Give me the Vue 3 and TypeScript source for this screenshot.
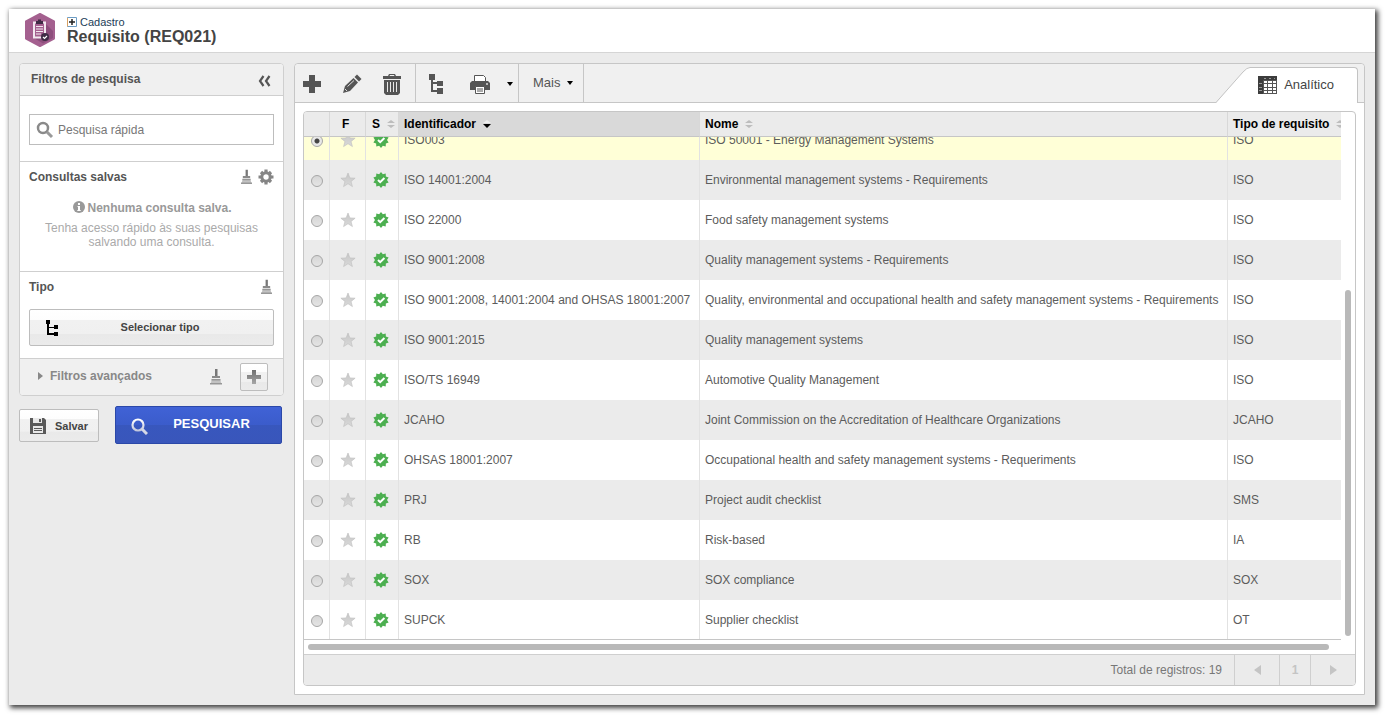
<script setup lang="ts">
import { onMounted, ref } from 'vue'

interface Requirement {
  id: string
  name: string
  type: string
}

const rows: Requirement[] = [
  { id: 'ISO003', name: 'ISO 50001 - Energy Management Systems', type: 'ISO' },
  { id: 'ISO 14001:2004', name: 'Environmental management systems - Requirements', type: 'ISO' },
  { id: 'ISO 22000', name: 'Food safety management systems', type: 'ISO' },
  { id: 'ISO 9001:2008', name: 'Quality management systems - Requirements', type: 'ISO' },
  { id: 'ISO 9001:2008, 14001:2004 and OHSAS 18001:2007', name: 'Quality, environmental and occupational health and safety management systems - Requirements', type: 'ISO' },
  { id: 'ISO 9001:2015', name: 'Quality management systems', type: 'ISO' },
  { id: 'ISO/TS 16949', name: 'Automotive Quality Management', type: 'ISO' },
  { id: 'JCAHO', name: 'Joint Commission on the Accreditation of Healthcare Organizations', type: 'JCAHO' },
  { id: 'OHSAS 18001:2007', name: 'Occupational health and safety management systems - Requeriments', type: 'ISO' },
  { id: 'PRJ', name: 'Project audit checklist', type: 'SMS' },
  { id: 'RB', name: 'Risk-based', type: 'IA' },
  { id: 'SOX', name: 'SOX compliance', type: 'SOX' },
  { id: 'SUPCK', name: 'Supplier checklist', type: 'OT' },
]

// Points of a star polygon centred in a 16x16 box.
function spikes(count: number, outer: number, inner: number, cy = 8): string {
  return Array.from({ length: count * 2 }, (_, i) => {
    const r = i % 2 ? inner : outer
    const a = (Math.PI * i) / count - Math.PI / 2
    return `${(8 + r * Math.cos(a)).toFixed(2)},${(cy + r * Math.sin(a)).toFixed(2)}`
  }).join(' ')
}
const sealPoints = spikes(10, 8, 6)
const starPoints = spikes(5, 7.5, 3.2, 8.5)

const selected = ref('ISO003')
const search = ref('')
const scroller = ref<HTMLElement | null>(null)

onMounted(() => {
  if (scroller.value) scroller.value.scrollTop = scroller.value.scrollHeight
})
</script>

<template>
  <div class="page">
    <svg class="defs" aria-hidden="true">
      <defs>
        <linearGradient id="metal" x1="0" y1="0" x2="0" y2="1">
          <stop offset="0" stop-color="#707070" />
          <stop offset="1" stop-color="#a6a6a6" />
        </linearGradient>
        <linearGradient id="silver" x1="0" y1="0" x2="0" y2="1">
          <stop offset="0" stop-color="#fff" />
          <stop offset="1" stop-color="#c4c8dc" />
        </linearGradient>
        <linearGradient id="starfill" x1="0" y1="0" x2="0" y2="1">
          <stop offset="0" stop-color="#c6c6c6" />
          <stop offset="1" stop-color="#dadada" />
        </linearGradient>
        <symbol id="brush" viewBox="0 0 12 16">
          <path d="M5 0h2.500v8H5z" fill="#777" />
          <path d="M2 7h8v2H2z" fill="#8a8a8a" />
          <path d="M2 10h8l1.500 5H.5z" fill="#c2c2c2" />
          <path d="M1.500 10h9v1.500h-9zM0 14h12v1.500H0z" fill="#979797" />
        </symbol>
        <symbol id="tree" viewBox="0 0 14 20">
          <path d="M0 0h6v6H4v2h4V7h6v5H8v-2H4v6h4v-2h6v6H8v-2H2V6H0z" />
        </symbol>
        <symbol id="sort" viewBox="0 0 8 8">
          <path d="M4 0l4 3H0zM4 8l4-3H0z" />
        </symbol>
        <symbol id="star" viewBox="0 0 16 16">
          <polygon :points="starPoints" fill="url(#starfill)" stroke="#bdbdbd" stroke-width=".6" />
        </symbol>
        <symbol id="badge" viewBox="0 0 16 16">
          <polygon :points="sealPoints" fill="#4caf50" />
          <path d="M5 8l2.200 2.200L11.400 6" fill="none" stroke="#fff" stroke-width="2" />
        </symbol>
      </defs>
    </svg>
    <div class="window">
      <header class="top">
        <svg class="logo" width="30" height="34" viewBox="0 0 30 34" aria-hidden="true">
          <path d="M15 1L29 8.500v17L15 33 1 25.500v-17z" fill="#a4608f" stroke="#a4608f" stroke-width="2" stroke-linejoin="round" />
          <path d="M19 9l9 9v7l-10 5.500-9-5.500z" fill="#8d4e7c" />
          <path d="M9 9.500h11v15H9z" fill="#a4608f" stroke="#f3e8f0" stroke-width="2" />
          <path d="M11 8h2V6.500h3V8h2v3h-7z" fill="#3f2b45" />
          <path d="M11 13.500h7M11 16h7M11 18.500h7M11 21h5" stroke="#f3e8f0" />
          <circle cx="20" cy="24" r="4" fill="#3f2b45" />
          <path d="M18 24l1.500 1.500L22 23" fill="none" stroke="#fff" stroke-width="1.200" />
        </svg>
        <div>
          <a class="crumb" href="#">
            <svg width="10" height="10" viewBox="0 0 10 10" aria-hidden="true">
              <path d="M.5.5h9v9h-9z" fill="#fff" stroke="#6c9cc4" />
              <path d="M.5 1v8.500" stroke="#d8a060" />
              <path d="M5 2v6M2 5h6" stroke="#222" stroke-width="1.500" />
            </svg>Cadastro</a>
          <h1>Requisito (REQ021)</h1>
        </div>
      </header>

      <div class="body">
        <aside class="side">
          <div class="filters">
            <div class="filters-head">
              <h2>Filtros de pesquisa</h2>
              <button class="bare" aria-label="Recolher">
                <svg width="13" height="12" viewBox="0 0 13 12"><path d="M5.500 1L2 6l3.500 5M11.500 1L8 6l3.500 5" fill="none" stroke="#555" stroke-width="2.200" /></svg>
              </button>
            </div>
            <div class="search-wrap">
              <label class="search">
                <svg width="18" height="18" viewBox="0 0 18 18" aria-hidden="true">
                  <circle cx="7" cy="7" r="5" fill="none" stroke="#8a8a8a" stroke-width="2.500" />
                  <path d="M11 11l5 5" stroke="#999" stroke-width="3" />
                </svg>
                <input v-model="search" type="text" placeholder="Pesquisa rápida" aria-label="Pesquisa rápida" />
              </label>
            </div>
            <section class="saved">
              <div class="section-head">
                <h3>Consultas salvas</h3>
                <button class="bare" aria-label="Limpar consultas"><svg width="11" height="16"><use href="#brush" /></svg></button>
                <button class="bare" aria-label="Configurar">
                  <svg width="16" height="16" viewBox="0 0 16 16">
                    <path d="M8 .5L8.010 15.500M.5 8L15.500 8.010M3 3l10 10M13 3L3 13" stroke="#858585" stroke-width="3.200" />
                    <circle cx="8" cy="8" r="4.200" fill="#fff" stroke="#858585" stroke-width="3" />
                  </svg>
                </button>
              </div>
              <p class="none">
                <svg width="12" height="12" viewBox="0 0 12 12" aria-hidden="true"><circle cx="6" cy="6" r="6" fill="#999" /><path d="M5 2h2v2H5zM4.500 5H7v4h.7v1H4.300V9H5V6h-.5z" fill="#fff" /></svg>
                Nenhuma consulta salva.
              </p>
              <p class="hint">Tenha acesso rápido às suas pesquisas salvando uma consulta.</p>
            </section>
            <section class="kind">
              <div class="section-head">
                <h3>Tipo</h3>
                <button class="bare" aria-label="Limpar tipo"><svg width="11" height="16"><use href="#brush" /></svg></button>
              </div>
              <button class="btn choose">
                <svg width="12" height="16" viewBox="0 0 12 16" aria-hidden="true"><path d="M0 0h4v4H3v3h5V5h4v4H8V8H3v5h5v-1h4v4H8v-1H1V4H0z" fill="#000" /></svg>
                <span>Selecionar tipo</span>
              </button>
            </section>
            <div class="advanced">
              <button class="bare expand">
                <svg width="5" height="8" viewBox="0 0 5 8" aria-hidden="true"><path d="M0 0l5 4-5 4z" fill="#888" /></svg>
                Filtros avançados
              </button>
              <button class="bare" aria-label="Limpar filtros"><svg width="12" height="18"><use href="#brush" /></svg></button>
              <button class="btn plus" aria-label="Adicionar filtro">
                <svg width="14" height="14" viewBox="0 0 14 14"><path d="M5 0h4v5h5v4H9v5H5V9H0V5h5z" fill="url(#metal)" /></svg>
              </button>
            </div>
          </div>
          <div class="actions">
            <button class="btn save">
              <svg width="16" height="16" viewBox="0 0 16 16" aria-hidden="true">
                <path d="M0 0h14l2 2v14H0z" fill="#5a5a5a" />
                <path d="M3 0h9v5H3zM3 8h10v7H3z" fill="#e8e8e8" />
                <path d="M9 1h2v3H9zM4 10h8v1H4zM4 12h8v1H4z" fill="#5a5a5a" />
              </svg>
              Salvar
            </button>
            <button class="find">
              <svg width="17" height="17" viewBox="0 0 17 17" aria-hidden="true">
                <circle cx="7" cy="7" r="5.500" fill="none" stroke="url(#silver)" stroke-width="2.200" />
                <path d="M11 11l5 5" stroke="#d5d8e6" stroke-width="3" />
              </svg>
              <span>PESQUISAR</span>
            </button>
          </div>
        </aside>

        <main class="main">
          <div class="toolbar">
            <div class="group edit">
              <button class="bare" aria-label="Novo"><svg width="18" height="18" viewBox="0 0 18 18"><path d="M6 0h6v6h6v6h-6v6H6v-6H0V6h6z" fill="#555" /></svg></button>
              <button class="bare" aria-label="Editar">
                <svg width="20" height="20" viewBox="0 0 20 20">
                  <path d="M1 19l2-7L11.500 4l4.500 4.500L8 17z" fill="#555" />
                  <path d="M12.500 3L15 .5 19.500 5 17 7.500z" fill="#555" />
                  <path d="M3 15l2 2M5.500 12.500L12 6.500" stroke="#ddd" />
                </svg>
              </button>
              <button class="bare" aria-label="Excluir">
                <svg width="18" height="21" viewBox="0 0 18 21">
                  <path d="M0 2h5l1-2h6l1 2h5v3H0zM1 6h16v13l-2 2H3l-2-2z" fill="#555" />
                  <path d="M7 1h4l.5 1h-5z" fill="#f0f0f0" />
                  <path d="M4.500 8v10M7.500 8v10M10.500 8v10M13.500 8v10" stroke="#e8e8e8" />
                </svg>
              </button>
            </div>
            <div class="group output">
              <button class="bare" aria-label="Estrutura"><svg width="14" height="20" fill="#555"><use href="#tree" /></svg></button>
              <button class="bare" aria-label="Imprimir">
                <svg width="20" height="19" viewBox="0 0 20 19">
                  <path d="M4.500 8V.5h9l2 2V8" fill="#fff" stroke="#555" />
                  <path d="M2 6h16l2 2v7H0V8z" fill="#555" />
                  <path d="M5.500 11.500h9v7h-9z" fill="#fff" stroke="#555" />
                  <path d="M7 14h6M7 16h6" stroke="#555" />
                  <circle cx="17" cy="9" r="1" fill="#ddd" />
                </svg>
              </button>
              <button class="bare" aria-label="Opções de impressão"><svg width="6" height="4" viewBox="0 0 6 4"><path d="M0 0h6L3 4z" /></svg></button>
            </div>
            <div class="group">
              <button class="bare more">Mais <svg width="6" height="4" viewBox="0 0 6 4" aria-hidden="true"><path d="M0 0h6L3 4z" /></svg></button>
            </div>
            <div class="tab">
              <svg class="slope" width="34" height="36" viewBox="0 0 34 36" aria-hidden="true">
                <path d="M0 36L27 5Q31 .5 34 .5V36z" fill="#fff" />
                <path d="M0 35.500L27 5Q31 .5 34 .5" fill="none" stroke="#c3c3c3" />
              </svg>
              <a class="tab-face" href="#">
                <svg width="19" height="18" viewBox="0 0 19 18" aria-hidden="true">
                  <path d="M0 0h19v18H0z" fill="#555" />
                  <path d="M0 0h19v4H5v14H0z" fill="#3c3c3c" />
                  <path d="M6 5h3v2H6zM10 5h4v2h-4zM15 5h3v2h-3zM6 8h3v3H6zM10 8h4v3h-4zM15 8h3v3h-3zM6 12h3v2H6zM10 12h4v2h-4zM15 12h3v2h-3zM6 15h3v2H6zM10 15h4v2h-4zM15 15h3v2h-3z" fill="#fff" />
                  <path d="M1 7.500h3M1 11.500h3M1 14.500h3M6 2.500h2M11 2.500h2M16 2.500h1" stroke="#999" />
                </svg>
                Analítico
              </a>
            </div>
          </div>

          <div class="content">
            <div class="grid">
              <div ref="scroller" class="scroller">
                <table>
                  <colgroup>
                    <col class="c-radio" /><col class="c-fav" /><col class="c-state" /><col class="c-id" /><col /><col class="c-type" />
                  </colgroup>
                  <thead>
                    <tr>
                      <th aria-label="Seleção"></th>
                      <th class="fav">F</th>
                      <th class="state"><button class="bare sort">S<svg width="8" height="8"><use href="#sort" /></svg></button></th>
                      <th class="sorted">
                        <button class="bare sort">Identificador<svg width="8" height="8" viewBox="0 0 8 8"><path d="M4 0l4 3H0z" fill="#eee" /><path d="M4 8l4-4H0z" fill="#000" /></svg></button>
                      </th>
                      <th><button class="bare sort">Nome<svg width="8" height="8"><use href="#sort" /></svg></button></th>
                      <th><button class="bare sort">Tipo de requisito<svg width="8" height="8"><use href="#sort" /></svg></button></th>
                    </tr>
                  </thead>
                  <tbody>
                    <tr v-for="row in rows" :key="row.id" :class="{ picked: selected === row.id }">
                      <td class="icon"><input v-model="selected" type="radio" name="requirement" :value="row.id" :aria-label="row.id" /></td>
                      <td class="icon"><button class="bare" aria-label="Favorito"><svg width="16" height="16"><use href="#star" /></svg></button></td>
                      <td class="icon state-cell"><svg width="16" height="16" role="img" aria-label="Ativo"><use href="#badge" /></svg></td>
                      <td>{{ row.id }}</td>
                      <td>{{ row.name }}</td>
                      <td>{{ row.type }}</td>
                    </tr>
                  </tbody>
                </table>
              </div>
              <div class="vbar"><div class="thumb"></div></div>
              <div class="hbar"><div class="thumb"></div></div>
              <div class="pager">
                <span>Total de registros: 19</span>
                <button class="bare step" aria-label="Anterior"><svg width="7" height="10" viewBox="0 0 7 10"><path d="M7 0v10L0 5z" fill="#c4c4c4" /></svg></button>
                <button class="bare num">1</button>
                <button class="bare step" aria-label="Próxima"><svg width="7" height="10" viewBox="0 0 7 10"><path d="M0 0v10l7-5z" fill="#c4c4c4" /></svg></button>
              </div>
            </div>
          </div>
        </main>
      </div>
    </div>
  </div>
</template>

<style>
body {
  background: #fff;
}
</style>

<style scoped>
* {
  box-sizing: border-box;
}
.page {
  height: 100vh;
  padding: 9px 10px 10px 9px;
  display: flex;
  font: 12px/14px "Liberation Sans", Arial, sans-serif;
  color: #555;
}
.defs {
  position: absolute;
  width: 0;
  height: 0;
}
svg {
  display: block;
  flex: none;
}
h1, h2, h3, p {
  margin: 0;
}
.bare {
  display: flex;
  align-items: center;
  padding: 0;
  border: 0;
  background: none;
  font: inherit;
  color: inherit;
  cursor: pointer;
}
.window {
  flex: 1;
  min-width: 0;
  display: flex;
  flex-direction: column;
  background: #ebebeb;
  box-shadow: 2px 2px 5px 1px rgba(0, 0, 0, 0.75);
}
.top {
  display: flex;
  gap: 11px;
  height: 44px;
  padding: 4px 16px 0;
  background: #fff;
  border-bottom: 1px solid #d5d5d5;
}
.top > div {
  padding: 3px 0 0 1px;
}
.crumb {
  display: flex;
  align-items: center;
  gap: 3px;
  font-size: 11px;
  line-height: 12px;
  color: #1c4058;
  text-decoration: none;
}
h1 {
  font-size: 16px;
  line-height: 17px;
  color: #444;
}
.body {
  flex: 1;
  min-height: 0;
  display: flex;
  gap: 10px;
  padding: 10px;
}
.side {
  width: 265px;
  flex: none;
}
.filters {
  border: 1px solid #cfcfcf;
  border-radius: 4px;
  background: #fff;
  overflow: hidden;
}
.filters-head {
  display: flex;
  justify-content: space-between;
  align-items: center;
  height: 32px;
  padding: 0 12px 0 11px;
  background: #f0f0f0;
  border-bottom: 1px solid #cfcfcf;
}
.filters-head h2 {
  padding-bottom: 2px;
}
.filters-head .bare {
  padding-top: 2px;
}
h2, h3 {
  font-size: 12px;
  line-height: 14px;
}
h3 {
  flex: 1;
}
.search-wrap {
  padding: 18px 9px 16px;
}
.search {
  display: flex;
  align-items: center;
  gap: 4px;
  height: 31px;
  padding: 0 6px;
  border: 1px solid #bdbdbd;
}
.search input {
  flex: 1;
  min-width: 0;
  padding: 0;
  border: 0;
  outline: 0;
  font: inherit;
  color: #555;
  background: none;
}
.search input::placeholder {
  color: #777;
  opacity: 1;
}
.saved, .kind {
  padding: 7px 9px 0;
  border-top: 1px solid #cfcfcf;
}
.saved {
  height: 110px;
}
.kind {
  padding-bottom: 12px;
}
.section-head {
  display: flex;
  align-items: center;
  gap: 6px;
  height: 16px;
}
.kind .section-head {
  padding-right: 2px;
}
.none {
  display: flex;
  justify-content: center;
  gap: 2px;
  padding: 16px 0 0 2px;
  font-weight: bold;
  color: #999;
}
.hint {
  padding: 6px 10px 0;
  text-align: center;
  color: #aaa;
}
.btn {
  display: flex;
  align-items: center;
  padding: 0;
  border: 1px solid #bdbdbd;
  border-radius: 2px;
  background: linear-gradient(#fff 0, #fdfdfd 29%, #f1f1f1 30%, #f0f0f0 69%, #e9e9e9 70%, #ebebeb 100%);
  font: bold 11px/14px "Liberation Sans", Arial, sans-serif;
  color: #444;
}
.choose {
  width: 100%;
  height: 37px;
  margin-top: 14px;
  padding: 0 16px;
}
.choose span {
  flex: 1;
  padding: 0 0 2px 5px;
}
.advanced {
  display: flex;
  align-items: center;
  height: 37px;
  padding: 0 15px 0 18px;
  background: #f0f0f0;
  border-top: 1px solid #cfcfcf;
}
.expand {
  flex: 1;
  gap: 7px;
  padding-bottom: 2px;
  font-weight: bold;
  color: #888;
}
.plus {
  width: 28px;
  height: 28px;
  margin-left: 18px;
  justify-content: center;
}
.actions {
  display: flex;
  align-items: center;
  justify-content: space-between;
  padding: 10px 2px 0 0;
}
.save {
  width: 80px;
  height: 33px;
  margin-top: 1px;
  justify-content: center;
  gap: 9px;
}
.find {
  display: flex;
  align-items: center;
  width: 167px;
  height: 38px;
  padding: 0 15px;
  border: 1px solid #2b48a8;
  border-radius: 2px;
  background: linear-gradient(#4062d6 0, #3b5ccb 50%, #3857bd 51%, #3956bb 100%);
  font: bold 13px/16px "Liberation Sans", Arial, sans-serif;
  color: #fff;
}
.find span {
  flex: 1;
  padding: 0 0 2px 9px;
}
.find svg {
  margin-top: 2px;
}
.main {
  flex: 1;
  min-width: 0;
  display: flex;
  flex-direction: column;
  border: 1px solid #c6c6c6;
  border-radius: 4px 4px 0 0;
  background: #fff;
}
.toolbar {
  display: flex;
  height: 39px;
  padding-right: 6px;
  background: #f0f0f0;
  border-bottom: 1px solid #c6c6c6;
  border-radius: 4px 4px 0 0;
}
.group {
  display: flex;
  align-items: center;
  padding: 2px 8px 0;
  border-right: 1px solid #c6c6c6;
}
.edit {
  gap: 21px;
  padding-right: 14px;
}
.output {
  padding: 2px 5px 0 13px;
}
.output .bare + .bare {
  margin-left: 27px;
}
.output .bare + .bare:last-child {
  margin-left: 17px;
}
.more {
  gap: 7px;
  padding: 0 2px 2px 6px;
  font-size: 13px;
}
.tab {
  display: flex;
  height: 36px;
  margin: 3px 0 -1px auto;
}
.tab-face {
  display: flex;
  align-items: center;
  gap: 7px;
  padding: 0 23px 2px 8px;
  background: #fff;
  border-top: 1px solid #c3c3c3;
  border-right: 1px solid #c3c3c3;
  border-radius: 0 4px 0 0;
  font-size: 13px;
  color: #444;
  text-decoration: none;
}
.content {
  flex: 1;
  min-height: 0;
  display: flex;
  padding: 8px;
}
.grid {
  flex: 1;
  min-width: 0;
  display: grid;
  grid-template-columns: minmax(0, 1fr) 14px;
  grid-template-rows: minmax(0, 1fr) 14px 31px;
  border: 1px solid #c6c6c6;
  border-radius: 4px;
  overflow: hidden;
}
.scroller {
  overflow: auto;
  scrollbar-width: none;
  border-bottom: 1px solid #c6c6c6;
}
table {
  width: calc(100% + 14px);
  table-layout: fixed;
  border-collapse: separate;
  border-spacing: 0;
  color: #5c5c5c;
}
.c-radio { width: 26px; }
.c-fav { width: 36px; }
.c-state { width: 33px; }
.c-id { width: 301px; }
.c-type { width: 127px; }
th {
  position: sticky;
  top: 0;
  z-index: 1;
  height: 25px;
  padding: 0 5px;
  background: #ebebeb;
  border-right: 1px solid #d8d8d8;
  border-bottom: 1px solid #c6c6c6;
  text-align: left;
  color: #000;
}
th.fav {
  padding-left: 12px;
}
th.state {
  padding: 0 0 0 6px;
}
th.sorted {
  background: #d9d9d9;
}
.sort {
  gap: 7px;
  font-weight: bold;
  fill: #bdbdbd;
}
td {
  height: 40px;
  padding: 0 5px;
  border-right: 1px solid #e2e2e2;
  white-space: nowrap;
}
tbody tr:nth-child(even) {
  background: #ebebeb;
}
tbody tr.picked {
  background: #ffffd7;
}
tbody tr:last-child td {
  height: 39px;
}
td.icon {
  padding: 0;
}
td.icon > * {
  margin: 0 auto;
}
td.state-cell {
  padding-right: 2px;
}
input[type="radio"] {
  appearance: none;
  display: block;
  width: 12px;
  height: 12px;
  border: 1px solid #a6a6a6;
  border-radius: 50%;
  background: linear-gradient(#d6d6d6, #e4e4e4);
}
td.icon input[type="radio"] {
  margin-top: 2px;
}
input[type="radio"]:checked {
  background: radial-gradient(circle, #444 0, #444 2px, #e8e8e8 3px);
}
.vbar {
  display: flex;
  flex-direction: column;
  justify-content: flex-end;
  align-items: center;
  padding-bottom: 4px;
}
.thumb {
  border-radius: 3px;
  background: #b9b9b9;
}
.vbar .thumb {
  width: 6px;
  height: 66%;
}
.hbar {
  grid-column: 1 / -1;
  padding: 4px 26px 4px 4px;
}
.hbar .thumb {
  height: 6px;
}
.pager {
  grid-column: 1 / -1;
  display: flex;
  align-items: stretch;
  justify-content: flex-end;
  background: #ebebeb;
  border-top: 1px solid #cfcfcf;
  color: #777;
}
.pager span {
  align-self: center;
  padding-right: 12px;
}
.step, .num {
  justify-content: center;
  width: 45px;
  border-left: 1px solid #cfcfcf;
}
.num {
  width: 31px;
  font-weight: bold;
  color: #c4c4c4;
}
</style>
